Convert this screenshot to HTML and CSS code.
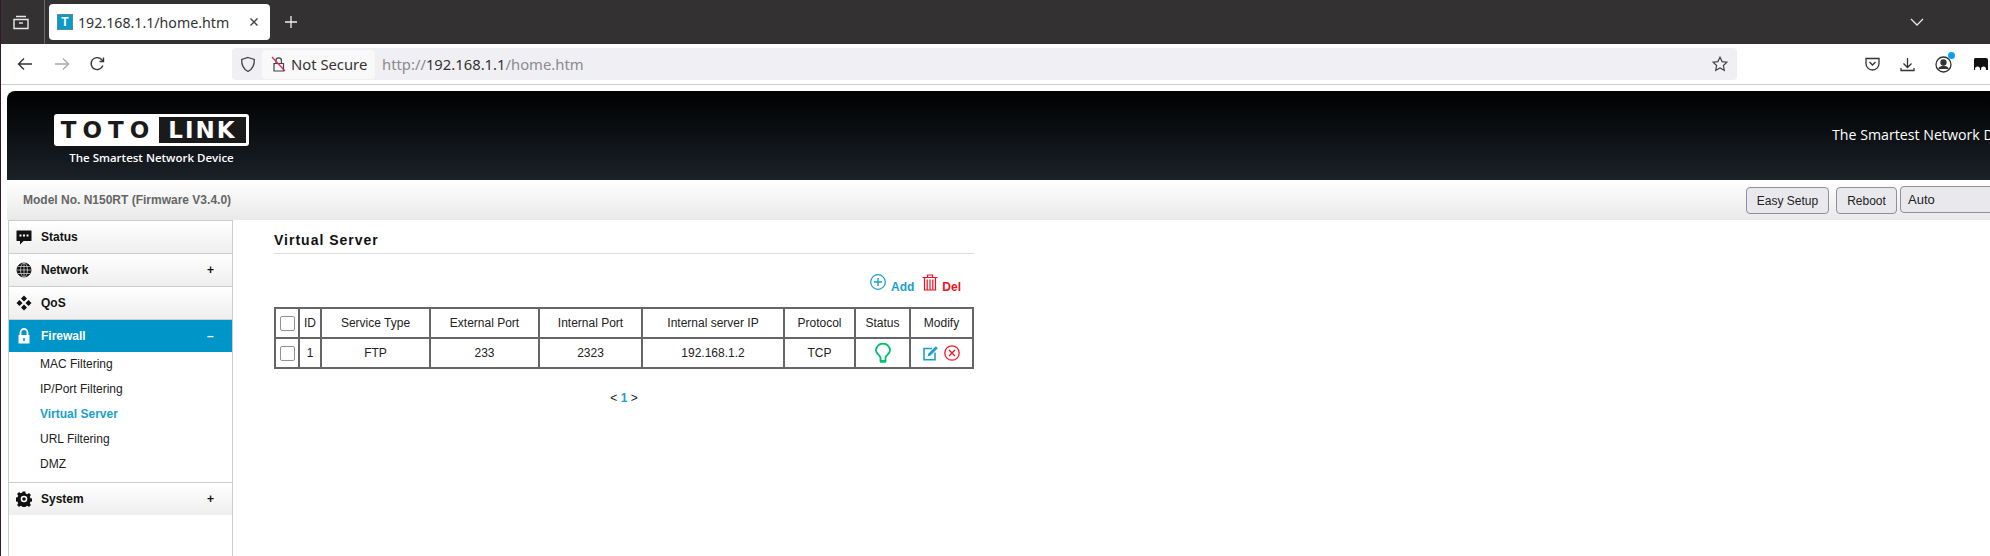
FILE: index.html
```html
<!DOCTYPE html>
<html>
<head>
    <title>192.168.1.1/home.htm</title>
    <link rel="stylesheet" href="styles.css">
</head>
<body>
    <div class="tabbar">
        <svg class="tabs-icon" width="18" height="18" viewBox="0 0 18 18" fill="none" stroke="#e8e8e8" stroke-width="1.4"><path d="M4 3.500h10M2 6.500h14v9H2z"/><path d="M7 10h4"/></svg>
        <div class="tab-sep"></div>
        <div class="tab">
            <span class="favicon">T</span>
            <span class="tab-title">192.168.1.1/home.htm</span>
            <svg width="10" height="10" viewBox="0 0 10 10" stroke="#444" stroke-width="1.4"><path d="M1.500 1.500l7 7M8.500 1.500l-7 7"/></svg>
        </div>
        <svg class="new-tab" width="14" height="14" viewBox="0 0 14 14" stroke="#f0f0f0" stroke-width="1.3"><path d="M7 1v12M1 7h12"/></svg>
        <svg class="tab-list" width="14" height="8" viewBox="0 0 14 8" fill="none" stroke="#e8e8e8" stroke-width="1.3"><path d="M1 1l6 6 6-6"/></svg>
    </div>

    <div class="toolbar">
        <svg class="nav-back" width="16" height="14" viewBox="0 0 16 14" fill="none" stroke="#333" stroke-width="1.4"><path d="M15 7H1.500M7 1.500L1.500 7 7 12.500"/></svg>
        <svg class="nav-fwd" width="16" height="14" viewBox="0 0 16 14" fill="none" stroke="#aaa" stroke-width="1.4"><path d="M1 7h13.500M9 1.500L14.500 7 9 12.500"/></svg>
        <svg class="nav-reload" width="16" height="16" viewBox="0 0 16 16" fill="none" stroke="#333" stroke-width="1.4"><path d="M13.800 9.500A6 6 0 1 1 12.500 3.500L14.500 5.500"/><path d="M14.500 1.500v4h-4"/></svg>
        <div class="urlbar">
            <svg class="shield" width="16" height="17" viewBox="0 0 16 17" fill="none" stroke="#444" stroke-width="1.3"><path d="M8 1.500l6.300 2c.2 5.500-1.500 9.500-6.300 12-4.800-2.500-6.500-6.500-6.300-12z"/></svg>
            <div class="not-secure">
                <svg width="15" height="16" viewBox="0 0 15 16" fill="none"><path d="M3 7.500h9.500V15H3zM5 7.500V4.500a2.700 2.700 0 0 1 5.400 0v3" stroke="#444" stroke-width="1.200"/><path d="M1 1l13 14" stroke="#e22850" stroke-width="1.300"/></svg>
                <span>Not Secure</span>
            </div>
            <div class="url"><span class="url-dim">http://</span>192.168.1.1<span class="url-dim">/home.htm</span></div>
            <svg class="star" width="16" height="16" viewBox="0 0 16 16" fill="none" stroke="#444" stroke-width="1.200"><path d="M8 1.200l2.100 4.400 4.800.6-3.500 3.300.9 4.800L8 12l-4.300 2.300.9-4.800L1.100 6.200l4.800-.6z"/></svg>
        </div>
        <svg class="tool-pocket" width="15" height="14" viewBox="0 0 15 14" fill="none" stroke="#333" stroke-width="1.300"><path d="M1 1.500h13v5a6.500 6.500 0 0 1-13 0z"/><path d="M4.500 5l3 3 3-3"/></svg>
        <svg class="tool-down" width="15" height="15" viewBox="0 0 15 15" fill="none" stroke="#333" stroke-width="1.300"><path d="M7.500 1v9M3.500 6.500l4 4 4-4M1 11v2.500h13V11"/></svg>
        <div class="account">
            <svg width="17" height="17" viewBox="0 0 17 17" fill="none" stroke="#333" stroke-width="1.300"><circle cx="8.500" cy="8.500" r="7.500"/><circle cx="8.500" cy="6.500" r="2.500" fill="#333"/><path d="M3.800 13c1-2 2.700-2.500 4.700-2.500s3.700.5 4.700 2.500" fill="#333"/></svg>
            <span class="dot"></span>
        </div>
        <svg class="tool-ext" width="15" height="15" viewBox="0 0 15 15"><path d="M2 1h11a2 2 0 0 1 2 2v10H1V3a2 2 0 0 1 1-2z" fill="#111"/><circle cx="4.500" cy="12" r="2.500" fill="#fff"/><circle cx="10.500" cy="12" r="2.500" fill="#fff"/></svg>
    </div>

    <div class="page">
        <div class="header">
            <div class="logo-block">
                <div class="logo"><span class="logo-toto">TOTO</span><span class="logo-link">LINK</span></div>
                <div class="logo-tag">The Smartest Network Device</div>
            </div>
            <div class="header-tag">The Smartest Network Device</div>
        </div>
        <div class="modelbar">
            <div class="model">Model No. N150RT (Firmware V3.4.0)</div>
            <button class="btn btn-easy">Easy Setup</button>
            <button class="btn btn-reboot">Reboot</button>
            <div class="lang">Auto</div>
        </div>
        <div class="main">
            <div class="sidebar">
                <div class="menu">
                    <svg viewBox="0 0 16 16" width="16" height="16"><path d="M1 1.500h14a.5.5 0 0 1 .5.5v9.500a.5.5 0 0 1-.5.5H7.500l-3.500 3.500V12H1a.5.5 0 0 1-.5-.5V2a.5.5 0 0 1 .5-.5z" fill="#111"/><path d="M3.500 5.500h2v2h-2zM7 5.500h2v2H7zM10.500 5.500h2v2h-2z" fill="#fff"/></svg>
                    <span>Status</span>
                </div>
                <div class="menu">
                    <svg viewBox="0 0 16 16" width="16" height="16" fill="none" stroke="#111" stroke-width="1"><circle cx="8" cy="8" r="7" fill="#111"/><path d="M8 1v14M1 8h14M2 4.500h12M2 11.500h12" stroke="#fff" stroke-width=".6"/><ellipse cx="8" cy="8" rx="3.500" ry="7" stroke="#fff" stroke-width=".6"/></svg>
                    <span>Network</span><b class="sign">+</b>
                </div>
                <div class="menu">
                    <svg viewBox="0 0 16 16" width="16" height="16" fill="#111"><path d="M8 .5l3 3-3 3-3-3zM8 9.500l3 3-3 3-3-3zM3.500 5L6.500 8l-3 3-3-3zM12.500 5l3 3-3 3-3-3z"/></svg>
                    <span>QoS</span>
                </div>
                <div class="menu menu-on">
                    <svg viewBox="0 0 16 16" width="16" height="16"><path d="M4.500 7V4.500a3.500 3.500 0 0 1 7 0V7" fill="none" stroke="#fff" stroke-width="1.800"/><path d="M2.500 7h11v8.500h-11z" fill="#fff"/><path d="M7.200 10h1.600v3H7.200z" fill="#0095c8"/></svg>
                    <span>Firewall</span><b class="sign">–</b>
                </div>
                <div class="submenu">
                    <a>MAC Filtering</a>
                    <a>IP/Port Filtering</a>
                    <a class="sub-on">Virtual Server</a>
                    <a>URL Filtering</a>
                    <a>DMZ</a>
                </div>
                <div class="menu menu-last">
                    <svg viewBox="0 0 16 16" width="16" height="16"><path d="M6.700.5h2.600l.4 2 1.600.7 1.700-1.100 1.900 1.900-1.100 1.700.7 1.600 2 .4v2.600l-2 .4-.7 1.600 1.100 1.700-1.900 1.900-1.700-1.100-1.600.7-.4 2H6.700l-.4-2-1.600-.7-1.700 1.100-1.900-1.900 1.100-1.700-.7-1.600-2-.4V6.700l2-.4.7-1.600-1.100-1.700 1.900-1.900 1.700 1.100 1.600-.7z" fill="#111"/><circle cx="8" cy="8" r="3.300" fill="#fff"/><circle cx="8" cy="8" r="1.800" fill="#111"/></svg>
                    <span>System</span><b class="sign">+</b>
                </div>
            </div>
            <div class="content">
                <h2>Virtual Server</h2>
                <div class="actions">
                    <svg width="16" height="16" viewBox="0 0 16 16" fill="none" stroke="#1a9fd0" stroke-width="1.200"><circle cx="8" cy="8" r="7.300"/><path d="M8 4v8M4 8h8" stroke-width="1.400"/></svg>
                    <span class="act-add">Add</span>
                    <svg class="del-icon" width="16" height="17" viewBox="0 0 16 17" fill="none" stroke="#f01020" stroke-width="1.200"><path d="M.5 3.500h15M5.500 3V1h5v2M2.500 3.500h11V16h-11zM5.200 5.500V16M8 5.500V16M10.800 5.500V16"/></svg>
                    <span class="act-del">Del</span>
                </div>
                <table>
                    <tr>
                        <th class="c-check"><span class="check"></span></th>
                        <th class="c-id">ID</th>
                        <th class="c-type">Service Type</th>
                        <th class="c-ext">External Port</th>
                        <th class="c-int">Internal Port</th>
                        <th class="c-ip">Internal server IP</th>
                        <th class="c-proto">Protocol</th>
                        <th class="c-status">Status</th>
                        <th>Modify</th>
                    </tr>
                    <tr>
                        <td><span class="check"></span></td>
                        <td>1</td>
                        <td>FTP</td>
                        <td>233</td>
                        <td>2323</td>
                        <td>192.168.1.2</td>
                        <td>TCP</td>
                        <td>
                            <svg class="cell-icon" width="16" height="20" viewBox="0 0 16 20" fill="none" stroke="#00c070" stroke-width="1.800"><path d="M5.500 18v-3.500C4.500 12 1 10.500 1 7.500a7 7 0 0 1 14 0c0 3-3.500 4.500-4.500 7V18z"/><path d="M5 18.500h6" stroke-width="2.500"/></svg>
                        </td>
                        <td class="modify">
                            <svg class="cell-icon" width="16" height="16" viewBox="0 0 16 16" fill="none"><path d="M12 7.500V14.800H1V3.500h8" stroke="#1a9fd0" stroke-width="1.600"/><path d="M4.500 11.500l1-3L12.800 1.200l2 2L7.500 10.500z" fill="#1a9fd0"/></svg>
                            <svg class="cell-icon" width="16" height="16" viewBox="0 0 16 16" fill="none" stroke="#f01828" stroke-width="1.300"><circle cx="8" cy="8" r="7.200"/><path d="M5 5l6 6M11 5l-6 6" stroke-width="1.400"/></svg>
                        </td>
                    </tr>
                </table>
                <div class="pager">&lt; <b>1</b> &gt;</div>
            </div>
        </div>
    </div>
</body>
</html>
```

FILE: styles.css
```css
html, body {
    margin: 0;
    height: 100%;
    overflow: hidden;
}
body {
    width: 1990px;
    height: 556px;
    box-sizing: border-box;
    border-left: 1px solid #2e1a2c;
    background: #fff;
    font-family: "Liberation Sans", Arial, sans-serif;
    color: #222;
}

/* browser chrome */
.tabbar {
    height: 44px;
    background: #333132;
    display: flex;
    align-items: center;
    margin-left: -1px;
    padding-left: 1px;
}
.tabs-icon {
    margin-left: 11px;
}
.tab-sep {
    width: 1px;
    height: 44px;
    background: #6a6869;
    margin-left: 14px;
}
.tab {
    width: 221px;
    height: 36px;
    box-sizing: border-box;
    margin-left: 4px;
    padding-left: 8px;
    background: #fff;
    border-radius: 4px;
    display: flex;
    align-items: center;
}
.favicon {
    width: 16px;
    height: 16px;
    background: #0a9bc8;
    border: 1px solid #5a8a9a;
    box-sizing: border-box;
    color: #fff;
    font: bold 12px/14px "Liberation Sans", sans-serif;
    text-align: center;
}
.tab-title {
    width: 171px;
    margin-left: 5px;
    font: 14.200px "Noto Sans", sans-serif;
    color: #333;
    white-space: nowrap;
}
.new-tab {
    margin-left: 14px;
}
.tab-list {
    margin-left: 1612px;
}
.toolbar {
    height: 40px;
    border-bottom: 1px solid #ccc;
    display: flex;
    align-items: center;
}
.nav-back {
    margin-left: 16px;
}
.nav-fwd {
    margin-left: 21px;
}
.nav-reload {
    margin-left: 19px;
}
.urlbar {
    width: 1505px;
    height: 32px;
    margin-left: 127px;
    background: #f0f0f4;
    border-radius: 4px;
    display: flex;
    align-items: center;
}
.shield {
    margin-left: 8px;
}
.not-secure {
    width: 113px;
    height: 29px;
    box-sizing: border-box;
    margin-left: 6px;
    padding-left: 9px;
    background: #f9f9fa;
    border-radius: 4px;
    display: flex;
    align-items: center;
    gap: 5px;
    font: 14.800px "Noto Sans", sans-serif;
    color: #333;
}
.url {
    flex: 1;
    margin-left: 7px;
    font: 14.800px "Noto Sans", sans-serif;
    color: #333;
}
.url-dim {
    color: #8a8a8e;
}
.star {
    margin-right: 9px;
}
.tool-pocket {
    margin-left: 128px;
}
.tool-down {
    margin-left: 20px;
}
.account {
    position: relative;
    height: 17px;
    margin-left: 20px;
}
.dot {
    position: absolute;
    top: -4px;
    right: -3px;
    width: 7px;
    height: 7px;
    border-radius: 50%;
    background: #0a9dfc;
}
.tool-ext {
    margin-left: 21px;
}

/* router page */
.page {
    width: 2100px;
    padding: 6px 0 0 6px;
}
.header {
    height: 89px;
    border-radius: 8px 8px 0 0;
    background: linear-gradient(#000, #1a2128);
    display: flex;
    color: #fff;
}
.logo-block {
    width: 195px;
    margin-left: 47px;
    padding-top: 23px;
}
.logo {
    height: 32px;
    box-sizing: border-box;
    background: #fff;
    border-radius: 3px;
    padding: 3px;
    display: flex;
    align-items: center;
    font: bold 23px/26px "DejaVu Sans", sans-serif;
}
.logo-toto {
    flex: 1;
    color: #1a1a1a;
    text-align: center;
    letter-spacing: 6px;
}
.logo-link {
    width: 87px;
    background: #1a1a1a;
    color: #fff;
    text-align: center;
    letter-spacing: 2px;
}
.logo-tag {
    margin-top: 4px;
    font: 600 11.500px/16px "Open Sans", sans-serif;
    text-align: center;
    white-space: nowrap;
}
.header-tag {
    margin-left: 1583px;
    padding-top: 34px;
    font: 14.200px/20px "Open Sans", sans-serif;
    white-space: nowrap;
}
.modelbar {
    height: 40px;
    box-sizing: border-box;
    background: linear-gradient(#fff, #e9e9e9);
    display: flex;
    align-items: flex-start;
}
.model {
    width: 1739px;
    padding-left: 16px;
    box-sizing: border-box;
    font-size: 12px;
    line-height: 40px;
    font-weight: bold;
    color: #666;
}
.btn {
    height: 27px;
    box-sizing: border-box;
    padding: 0;
    background: #e9e9ed;
    border: 1px solid #8f8f9d;
    border-radius: 4px;
    font: 12px "Liberation Sans", sans-serif;
    color: #222;
    margin-top: 7px;
}
.btn-easy {
    width: 83px;
}
.btn-reboot {
    width: 61px;
    margin-left: 7px;
}
.lang {
    width: 150px;
    height: 27px;
    box-sizing: border-box;
    margin: 6px 0 0 3px;
    padding: 5px 0 0 7px;
    background: #e9e9ed;
    border: 1px solid #8f8f9d;
    border-radius: 4px;
    font-size: 13px;
}
.main {
    display: flex;
    height: 340px;
}

/* left menu */
.sidebar {
    width: 225px;
    box-sizing: border-box;
    border-left: 1px solid #ccc;
    border-right: 1px solid #ccc;
    border-top: 1px solid #ccc;
    margin-left: 1px;
}
.menu {
    height: 33px;
    box-sizing: border-box;
    padding-left: 7px;
    background: linear-gradient(#fff, #eee);
    border-bottom: 1px solid #ccc;
    display: flex;
    align-items: center;
    font-size: 12px;
    font-weight: bold;
    color: #111;
}
.menu span {
    margin-left: 9px;
    width: 166px;
}
.sign {
    font-size: 12px;
}
.menu-on {
    height: 32px;
    background: #0095c8;
    color: #fff;
    border-bottom: none;
}
.menu-last {
    border-top: 1px solid #ccc;
    border-bottom: none;
}
.submenu {
    height: 130px;
    display: flex;
    flex-direction: column;
}
.submenu a {
    height: 25px;
    line-height: 25px;
    padding-left: 31px;
    font-size: 12px;
    color: #222;
}
.submenu a.sub-on {
    color: #1a9fd0;
    font-weight: bold;
}

/* virtual server panel */
.content {
    width: 700px;
    margin-left: 41px;
}
h2 {
    margin: 0;
    height: 34px;
    box-sizing: border-box;
    padding-top: 12px;
    border-bottom: 1px solid #ddd;
    font-size: 14px;
    line-height: 16px;
    letter-spacing: 1px;
    color: #111;
}
.actions {
    height: 53px;
    box-sizing: border-box;
    padding: 20px 13px 0 0;
    display: flex;
    justify-content: flex-end;
    align-items: flex-start;
    font-size: 12px;
    font-weight: bold;
}
.act-add {
    margin: 6px 0 0 5px;
    color: #1a9fd0;
}
.act-del {
    margin: 6px 0 0 4px;
    color: #f01020;
}
.del-icon {
    margin-left: 8px;
}
table {
    width: 700px;
    table-layout: fixed;
    border-collapse: collapse;
    border: 2px solid #666;
}
th, td {
    height: 28px;
    padding: 0;
    border: 2px solid #666;
    font-size: 12px;
    font-weight: normal;
    text-align: center;
    color: #222;
}
.c-check {
    width: 22px;
}
.c-id {
    width: 20px;
}
.c-type {
    width: 107px;
}
.c-ext {
    width: 107px;
}
.c-int {
    width: 101px;
}
.c-ip {
    width: 140px;
}
.c-proto {
    width: 69px;
}
.c-status {
    width: 53px;
}
.check {
    display: inline-block;
    width: 13px;
    height: 13px;
    border: 1px solid #8f8f9d;
    border-radius: 2px;
    vertical-align: middle;
}
.cell-icon {
    vertical-align: middle;
}
.modify .cell-icon + .cell-icon {
    margin-left: 2px;
}
.pager {
    margin-top: 21px;
    text-align: center;
    font-size: 12px;
    line-height: 16px;
    width: 700px;
}
.pager b {
    color: #1a9fd0;
}
```
